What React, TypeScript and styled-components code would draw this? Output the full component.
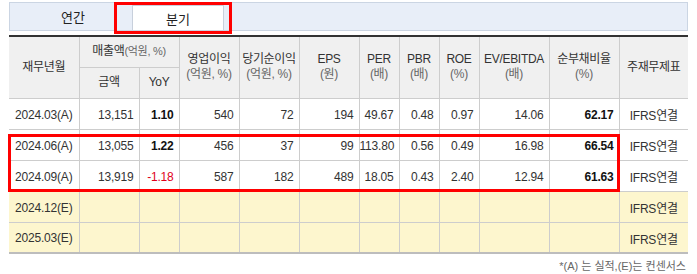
import { FC } from "react";
import styled, { createGlobalStyle } from "styled-components";

const GlobalStyle = createGlobalStyle`
  body {
    margin: 0;
    background: #fff;
    font-family: "Liberation Sans", "Noto Sans CJK KR", sans-serif;
    font-size: 12px;
    color: #333;
  }
`;

const Page = styled.div`
  position: relative;
  width: 697px;
  height: 274px;
  padding: 2px 9px 0 9px;
  box-sizing: border-box;
`;

const TabBar = styled.div`
  display: flex;
  align-items: flex-end;
  height: 29px;
  box-sizing: border-box;
  background: #e8eef8;
  border: 1px solid #cbd5e3;
  padding-left: 4px;
`;

const Tab = styled.div<{ $active?: boolean }>`
  display: flex;
  align-items: center;
  justify-content: center;
  height: ${(p) => (p.$active ? "25px" : "28px")};
  width: ${(p) => (p.$active ? "92px" : "118px")};
  box-sizing: border-box;
  background: ${(p) => (p.$active ? "#fff" : "transparent")};
  border: ${(p) => (p.$active ? "1px solid #c8d0dc" : "none")};
  border-bottom: none;
  font-size: 13px;
  color: #222;
`;

const Table = styled.table`
  margin-top: 4px;
  width: 679px;
  border-collapse: collapse;
  table-layout: fixed;
  border-top: 2px solid #333;
  border-bottom: 2px solid #bdbdbd;

  tr {
    height: 31px;
  }
  th,
  td {
    border: 1px solid #cdcdcd;
    padding: 0;
    white-space: nowrap;
  }
  tr > :first-child {
    border-left: none;
  }
  tr > :last-child {
    border-right: none;
  }
`;

const Th = styled.th`
  background: #f0f0f0;
  font-weight: normal;
  font-size: 12px;
  color: #333;
  text-align: center;
  line-height: 15px;
  letter-spacing: -0.3px;
`;

const Unit = styled.span`
  display: block;
  color: #666;
`;

const InlineUnit = styled.span`
  color: #666;
  font-size: 11px;
`;

const Row = styled.tr<{ $estimate?: boolean }>`
  background: ${(p) => (p.$estimate ? "#fdf6ce" : "#fff")};
`;

const Cell = styled.td<{ $align?: "left" | "center" | "right"; $bold?: boolean; $neg?: boolean }>`
  text-align: ${(p) => p.$align || "right"};
  padding: ${(p) => (p.$align === "center" ? "2px 0 0 0" : "2px 5px 0 0")} !important;
  font-weight: ${(p) => (p.$bold ? "bold" : "normal")};
  color: ${(p) => (p.$neg ? "#e0001a" : p.$bold ? "#111" : "#333")};
  font-size: 12px;
  letter-spacing: -0.2px;
`;

const Note = styled.div`
  text-align: right;
  padding-top: 3px;
  padding-right: 2px;
  font-size: 11px;
  color: #666;
`;

const Highlight = styled.div<{ $x: number; $y: number; $w: number; $h: number }>`
  position: absolute;
  left: ${(p) => p.$x}px;
  top: ${(p) => p.$y}px;
  width: ${(p) => p.$w}px;
  height: ${(p) => p.$h}px;
  border: 3px solid #f00;
  box-sizing: border-box;
  pointer-events: none;
`;

const widths = [70, 60, 40, 60, 60, 60, 40, 40, 40, 70, 70, 69];

type DataRow = {
  period: string;
  estimate?: boolean;
  values: string[];
};

const rows: DataRow[] = [
  { period: "2024.03(A)", values: ["13,151", "1.10", "540", "72", "194", "49.67", "0.48", "0.97", "14.06", "62.17"] },
  { period: "2024.06(A)", values: ["13,055", "1.22", "456", "37", "99", "113.80", "0.56", "0.49", "16.98", "66.54"] },
  { period: "2024.09(A)", values: ["13,919", "-1.18", "587", "182", "489", "18.05", "0.43", "2.40", "12.94", "61.63"] },
  { period: "2024.12(E)", estimate: true, values: ["", "", "", "", "", "", "", "", "", ""] },
  { period: "2025.03(E)", estimate: true, values: ["", "", "", "", "", "", "", "", "", ""] },
];

const App: FC = () => {
  return (
    <Page>
      <GlobalStyle />
      <TabBar>
        <Tab>연간</Tab>
        <Tab $active>분기</Tab>
      </TabBar>
      <Table>
        <colgroup>
          {widths.map((w, i) => (
            <col key={i} style={{ width: w }} />
          ))}
        </colgroup>
        <thead>
          <tr>
            <Th rowSpan={2}>재무년월</Th>
            <Th colSpan={2}>
              매출액<InlineUnit>(억원, %)</InlineUnit>
            </Th>
            <Th rowSpan={2}>
              영업이익<Unit>(억원, %)</Unit>
            </Th>
            <Th rowSpan={2}>
              당기순이익<Unit>(억원, %)</Unit>
            </Th>
            <Th rowSpan={2}>
              EPS<Unit>(원)</Unit>
            </Th>
            <Th rowSpan={2}>
              PER<Unit>(배)</Unit>
            </Th>
            <Th rowSpan={2}>
              PBR<Unit>(배)</Unit>
            </Th>
            <Th rowSpan={2}>
              ROE<Unit>(%)</Unit>
            </Th>
            <Th rowSpan={2}>
              EV/EBITDA<Unit>(배)</Unit>
            </Th>
            <Th rowSpan={2}>
              순부채비율<Unit>(%)</Unit>
            </Th>
            <Th rowSpan={2}>주재무제표</Th>
          </tr>
          <tr>
            <Th>금액</Th>
            <Th>YoY</Th>
          </tr>
        </thead>
        <tbody>
          {rows.map((row) => (
            <Row key={row.period} $estimate={row.estimate}>
              <Cell $align="center">{row.period}</Cell>
              {row.values.map((v, i) => (
                <Cell
                  key={i}
                  $bold={(i === 1 && !v.startsWith("-")) || i === 9}
                  $neg={v.startsWith("-")}
                >
                  {v}
                </Cell>
              ))}
              <Cell $align="center">IFRS연결</Cell>
            </Row>
          ))}
        </tbody>
      </Table>
      <Note>*(A) 는 실적,(E)는 컨센서스</Note>
      <Highlight $x={114} $y={2} $w={118} $h={32} />
      <Highlight $x={8} $y={134} $w={612} $h={58} />
    </Page>
  );
};

export default App;
